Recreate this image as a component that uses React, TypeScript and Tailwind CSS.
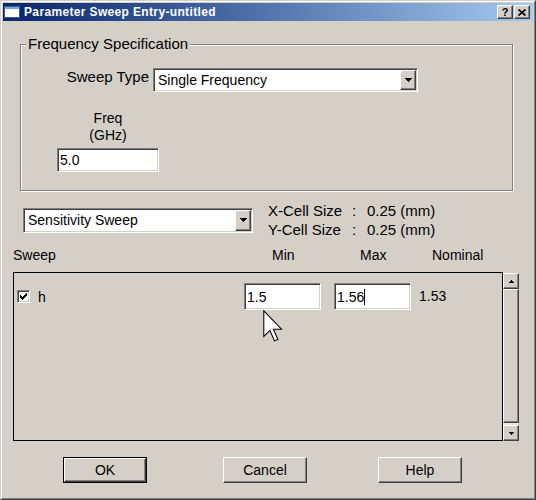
import type { ReactNode } from 'react'

// classic 3d bevels
const raised =
  'bg-[#d4d0c8] border border-t-white border-l-white border-r-[#404040] border-b-[#404040] shadow-[inset_-1px_-1px_0_#808080]'
const sunken =
  'border border-t-[#808080] border-l-[#808080] border-r-white border-b-white shadow-[inset_1px_1px_0_#404040,inset_-1px_-1px_0_#d4d0c8] p-[1px]'

function Arrow({ up = false, big = true }: { up?: boolean; big?: boolean }) {
  const rows = big ? [7, 5, 3, 1] : [5, 3, 1]
  const w = rows[0]
  const h = rows.length
  return (
    <svg width={w} height={h} viewBox={`0 0 ${w} ${h}`} shapeRendering="crispEdges">
      {rows.map((len, i) => (
        <rect key={i} x={(w - len) / 2} y={up ? h - 1 - i : i} width={len} height={1} fill="#000" />
      ))}
    </svg>
  )
}

function Combo({ value, className }: { value: string; className: string }) {
  return (
    <div className={`flex bg-white ${sunken} ${className}`}>
      <span className="flex-1 flex items-center pl-[3px] text-[14px] leading-none">{value}</span>
      <div className={`w-[16px] flex items-center justify-center ${raised}`}>
        <Arrow />
      </div>
    </div>
  )
}

function Field({ children, className }: { children: ReactNode; className: string }) {
  return (
    <div className={`flex items-center bg-white pl-[2px] text-[14px] leading-none ${sunken} ${className}`}>
      {children}
    </div>
  )
}

function Button({ label, isDefault = false }: { label: string; isDefault?: boolean }) {
  const inner = (
    <div className={`flex-1 flex items-center justify-center text-[14px] ${raised}`}>{label}</div>
  )
  return isDefault ? (
    <div className="flex w-[84px] h-[26px] border border-black">{inner}</div>
  ) : (
    <div className="flex w-[84px] h-[26px]">{inner}</div>
  )
}

function CellLine({ axis }: { axis: string }) {
  return (
    <div className="flex">
      <span className="w-[84px]">{axis}-Cell Size</span>
      <span className="w-[15px]">:</span>
      <span>0.25 (mm)</span>
    </div>
  )
}

export default function App() {
  return (
    <div className="w-[536px] h-[500px] bg-[#d4d0c8] border border-[#d4d0c8] border-r-[#404040] border-b-[#404040] font-['Liberation_Sans',Arial,sans-serif] text-black overflow-hidden">
      <div className="h-full border border-white border-r-[#808080] border-b-[#808080] p-[1px] flex flex-col">
        {/* title bar */}
        <div className="h-[18px] flex items-center bg-linear-to-r from-[#0a246a] to-[#a6caf0] pl-[1px] pr-[3px]">
          <svg width="16" height="12" viewBox="0 0 16 12" shapeRendering="crispEdges">
            <rect x="0" y="0" width="16" height="12" fill="#fff" />
            <rect x="0" y="0" width="16" height="3" fill="#7ea4e0" />
            <rect x="0.5" y="0.5" width="15" height="11" fill="none" stroke="#3a5a9a" strokeWidth="1" />
          </svg>
          <span className="ml-[4px] text-white text-[12px] font-bold tracking-[0.35px] leading-none">
            Parameter Sweep Entry-untitled
          </span>
          <div className="ml-auto flex gap-[1px]">
            <div className={`w-[16px] h-[14px] flex items-center justify-center text-[11px] font-bold leading-none ${raised}`}>
              ?
            </div>
            <div className={`w-[16px] h-[14px] flex items-center justify-center ${raised}`}>
              <svg width="8" height="7" viewBox="0 0 8 7">
                <path d="M0.5 0.5L7.5 6.5M7.5 0.5L0.5 6.5" stroke="#000" strokeWidth="1.6" />
              </svg>
            </div>
          </div>
        </div>

        {/* Frequency Specification group */}
        <div className="relative ml-[17px] mt-[23px] w-[493px] border border-[#808080] shadow-[inset_1px_1px_0_#fff,1px_1px_0_#fff] pb-[18px]">
          <span className="absolute -top-[9px] left-[5px] px-[2px] bg-[#d4d0c8] text-[15px] leading-[16px]">
            Frequency Specification
          </span>
          <div className="mt-[23px] flex items-start">
            <span className="w-[128px] pt-[1px] text-right text-[15px] leading-[16px]">Sweep Type</span>
            <Combo value="Single Frequency" className="ml-[4px] w-[265px] h-[24px]" />
          </div>
          <div className="mt-[18px] ml-[36px] w-[102px] flex flex-col items-center text-[14px] leading-[17px]">
            <span>Freq</span>
            <span>(GHz)</span>
            <Field className="mt-[4px] w-[102px] h-[24px]">5.0</Field>
          </div>
        </div>

        {/* sensitivity sweep + cell sizes */}
        <div className="mt-[10px] flex items-center">
          <Combo value="Sensitivity Sweep" className="ml-[20px] w-[230px] h-[25px]" />
          <div className="ml-[15px] flex flex-col text-[15px] leading-[19px]">
            <CellLine axis="X" />
            <CellLine axis="Y" />
          </div>
        </div>

        {/* column headers */}
        <div className="mt-[8px] ml-[10px] flex text-[14px] leading-[17px]">
          <span className="w-[259px]">Sweep</span>
          <span className="w-[88px]">Min</span>
          <span className="w-[72px]">Max</span>
          <span>Nominal</span>
        </div>

        {/* parameter list */}
        <div className="mt-[8px] ml-[10px] flex">
          <div className="relative w-[490px] h-[169px] border border-black">
            <div className="pt-[10px] flex items-center text-[14px]">
              <div className="w-[230px] pl-[3px] flex items-center">
                <div className={`w-[13px] h-[13px] bg-white flex items-center justify-center ${sunken}`}>
                  <svg width="7" height="7" viewBox="0 0 7 7" shapeRendering="crispEdges">
                    <path d="M0 2h1v1h1v1h1V3h1V2h1V1h1V0h1v3H6v1H5v1H4v1H3v1H2V6H1V5H0z" fill="#000" />
                  </svg>
                </div>
                <span className="ml-[8px] leading-none">h</span>
              </div>
              <Field className="w-[77px] h-[27px]">1.5</Field>
              <Field className="ml-[13px] w-[77px] h-[27px]">
                1.56
                <span className="w-[1px] h-[16px] bg-black" />
              </Field>
              <span className="ml-[8px]">1.53</span>
            </div>
            <svg
              width="20"
              height="32"
              viewBox="0 0 12.5 20"
              className="absolute left-[249px] top-[37px]"
            >
              <path
                d="M0.5 0.5V16.5L4.3 12.8L7.2 19.3L9.3 18.4L6.5 12H11.6Z"
                fill="#fff"
                stroke="#000"
                strokeWidth="0.65"
                strokeLinejoin="miter"
              />
            </svg>
          </div>
          <div className="mt-[1px] w-[16px] h-[168px] flex flex-col">
            <div className={`h-[16px] flex items-center justify-center ${raised}`}>
              <Arrow up big={false} />
            </div>
            <div className={`h-[134px] ${raised}`} />
            <div className="h-[2px] bg-[repeating-linear-gradient(90deg,#fff_0_1px,#d4d0c8_1px_2px)]" />
            <div className={`h-[16px] flex items-center justify-center ${raised}`}>
              <Arrow big={false} />
            </div>
          </div>
        </div>

        {/* buttons */}
        <div className="mt-[16px] ml-[60px] flex">
          <Button label="OK" isDefault />
          <div className="ml-[76px]">
            <Button label="Cancel" />
          </div>
          <div className="ml-[71px]">
            <Button label="Help" />
          </div>
        </div>
      </div>
    </div>
  )
}
